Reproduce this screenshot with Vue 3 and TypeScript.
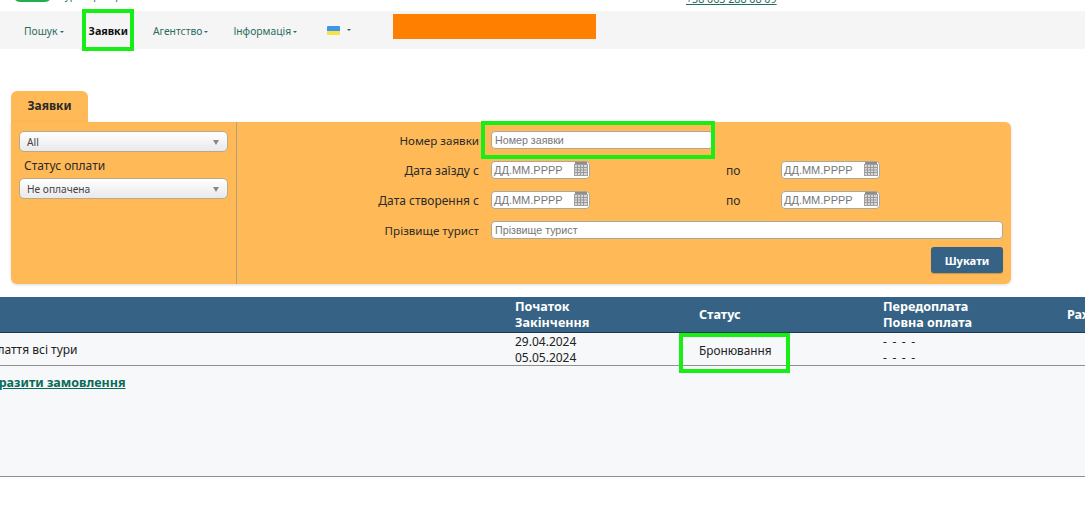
<script setup lang="ts">
const navItems = [
  { label: 'Пошук', caret: true },
  { label: 'Заявки', active: true },
  { label: 'Агентство', caret: true },
  { label: 'Інформація', caret: true }
]
const dateRows = ['Дата заїзду с', 'Дата створення с']
</script>

<template>
  <div class="page">
    <div class="topstrip">
      <div class="logo"></div>
      <div class="slogan">туроператор</div>
      <a class="phone">+38 063 288 08 09</a>
    </div>

    <nav class="nav">
      <div
        v-for="item in navItems"
        :key="item.label"
        class="nav-item"
        :class="{ active: item.active }"
      >
        {{ item.label }}<i v-if="item.caret" class="caret"></i>
        <span v-if="item.active" class="hl hl-nav"></span>
      </div>
      <div class="nav-flag">
        <svg width="13" height="9" viewBox="0 0 13 9">
          <rect width="13" height="9" rx="1" fill="#3f97e6" />
          <rect y="5" width="13" height="4" fill="#f6e345" />
        </svg>
        <i class="caret flag-caret"></i>
      </div>
      <div class="orange"></div>
    </nav>

    <div class="tab">Заявки</div>
    <section class="panel">
      <div class="side">
        <div class="select">All<i class="sel-arrow"></i></div>
        <div class="side-label">Статус оплати</div>
        <div class="select">Не оплачена<i class="sel-arrow"></i></div>
      </div>
      <div class="form">
        <div class="row">
          <label class="tight">Номер заявки</label>
          <div class="input num">
            Номер заявки
            <span class="hl hl-input"></span>
          </div>
        </div>
        <div v-for="r in dateRows" :key="r" class="row">
          <label>{{ r }}</label>
          <div class="input date">
            ДД.ММ.РРРР
            <svg class="cal" width="14" height="17" viewBox="0 0 14 17">
              <rect x="1" y="2" width="12" height="3" fill="#8d8d8d" />
              <rect x="0.5" y="4.5" width="13" height="11" fill="#d8d8d8" stroke="#a0a0a0" />
              <path d="M3.5 5v10M6.5 5v10M9.5 5v10M1 7.5h12M1 10h12M1 12.5h12" stroke="#999" stroke-width="1" fill="none" />
            </svg>
          </div>
          <span class="po">по</span>
          <div class="input date">
            ДД.ММ.РРРР
            <svg class="cal" width="14" height="17" viewBox="0 0 14 17">
              <rect x="1" y="2" width="12" height="3" fill="#8d8d8d" />
              <rect x="0.5" y="4.5" width="13" height="11" fill="#d8d8d8" stroke="#a0a0a0" />
              <path d="M3.5 5v10M6.5 5v10M9.5 5v10M1 7.5h12M1 10h12M1 12.5h12" stroke="#999" stroke-width="1" fill="none" />
            </svg>
          </div>
        </div>
        <div class="row">
          <label class="tight">Прізвище турист</label>
          <div class="input wide">Прізвище турист</div>
        </div>
        <div class="actions"><button class="btn">Шукати</button></div>
      </div>
    </section>

    <section class="table">
      <div class="thead">
        <div></div>
        <div>Початок<br />Закінчення</div>
        <div>Статус</div>
        <div>Передоплата<br />Повна оплата</div>
        <div>Рахунок</div>
      </div>
      <div class="trow">
        <div class="tour"><span>Оплаття всі тури</span></div>
        <div class="dates">29.04.2024<br />05.05.2024</div>
        <div class="status">
          Бронювання
          <span class="hl hl-status"></span>
        </div>
        <div class="dashes">- - - -<br />- - - -</div>
        <div></div>
      </div>
      <div class="detail">
        <a class="show">Відобразити замовлення</a>
      </div>
    </section>
  </div>
</template>

<style>
html, body { margin: 0; background: #fff; overflow: hidden; }
</style>

<style scoped>
.page {
  width: 1085px;
  height: 508px;
  overflow: hidden;
  font-family: "Noto Sans", "DejaVu Sans", sans-serif;
  font-size: 12px;
  color: #222;
}
.topstrip {
  height: 11px;
  display: flex;
  align-items: flex-end;
  overflow: hidden;
  position: relative;
}
.logo {
  width: 39px;
  height: 20px;
  margin: 0 0 9px 13px;
  background: #21b04b;
  border-radius: 0 0 7px 7px;
  flex: none;
}
.slogan {
  margin: 0 0 10px 8px;
  width: 60px;
  line-height: 12px;
  font-size: 10px;
  color: #1f6e5e;
  flex: none;
}
.phone {
  margin: 0 0 5px 566px;
  font-size: 10.7px;
  line-height: 14px;
  color: #1f6e5e;
  text-decoration: underline;
  white-space: nowrap;
  flex: none;
}
.nav {
  height: 38px;
  background: #f5f5f5;
  display: flex;
  align-items: center;
  padding-left: 24px;
  font-size: 10.3px;
  color: #2b6b60;
}
.nav-item {
  position: relative;
  margin-right: 25px;
  white-space: nowrap;
  margin-top: 1px;
}
.nav-item.active {
  font-size: 10.7px;
  font-weight: 700;
  color: #111;
}
.caret {
  display: inline-block;
  width: 0;
  height: 0;
  margin-left: 2px;
  vertical-align: middle;
  border-left: 2px solid transparent;
  border-right: 2px solid transparent;
  border-top: 2px solid #2b6b60;
}
.nav-flag {
  display: flex;
  align-items: center;
  margin-left: 5px;
}
.flag-caret { margin-left: 7px; }
.orange {
  width: 203px;
  height: 25px;
  margin: -7px 0 0 42px;
  background: #ff7f00;
}
.hl {
  position: absolute;
  border: 4px solid #16ee16;
  pointer-events: none;
  box-sizing: border-box;
}
.hl-nav { left: -7px; top: -15px; width: 52px; height: 42px; }
.hl-input { left: -11px; top: -11px; width: 234px; height: 38px; }
.hl-status { left: -20px; top: -9px; width: 111px; height: 40px; }

.tab {
  width: 77px;
  height: 31px;
  margin: 42px 0 0 11px;
  background: #ffba57;
  border-radius: 6px 6px 0 0;
  font-weight: 700;
  font-size: 12px;
  line-height: 30px;
  text-align: center;
  color: #2a2a2a;
}
.panel {
  width: 1000px;
  height: 162px;
  margin-left: 11px;
  background: #ffba57;
  border-radius: 0 6px 6px 6px;
  box-shadow: 0 1px 3px rgba(0, 0, 0, 0.15);
  display: flex;
}
.side {
  box-sizing: border-box;
  border-right: 1px solid #b5a07d;
  padding: 9px 8px 0 8px;
  flex: none;
  width: 226px;
}
.select {
  position: relative;
  height: 21px;
  line-height: 20px;
  width: 209px;
  box-sizing: border-box;
  padding-left: 7px;
  font-size: 10.2px;
  color: #444;
  background: linear-gradient(#fff, #e9e9ec);
  border: 1px solid #b9a98c;
  border-radius: 5px;
}
.sel-arrow {
  position: absolute;
  right: 8px;
  top: 8px;
  border-left: 3px solid transparent;
  border-right: 3px solid transparent;
  border-top: 5px solid #888;
}
.side-label {
  margin: 5px 0 4px 5px;
  line-height: 17px;
  color: #2a2a2a;
}
.form {
  flex: 1;
  padding-top: 9px;
  padding-right: 8px;
}
.row {
  display: flex;
  align-items: center;
  height: 18px;
  margin-bottom: 12px;
}
.row label {
  width: 242px;
  margin-right: 12px;
  text-align: right;
  flex: none;
  color: #2a2a2a;
}
.row label.tight { font-size: 11.6px; }
.input {
  position: relative;
  box-sizing: border-box;
  height: 18px;
  line-height: 16px;
  padding-left: 3px;
  font-family: "Liberation Sans", Arial, sans-serif;
  font-size: 10.7px;
  color: #777;
  background: #fff;
  border: 1px solid #a8a8a0;
  border-radius: 4px;
  white-space: nowrap;
}
.num { width: 222px; }
.date { width: 99px; padding-left: 2px; font-size: 11px; }
.wide { flex: 1; }
.cal {
  position: absolute;
  right: 1px;
  top: -2px;
}
.po {
  width: 55px;
  margin-left: 136px;
  flex: none;
  color: #2a2a2a;
}
.actions {
  display: flex;
  justify-content: flex-end;
  margin-top: -4px;
}
.btn {
  width: 72px;
  height: 26px;
  padding: 0;
  border: 0;
  border-radius: 3px;
  background: #366385;
  color: #fff;
  font: 700 11.2px "Noto Sans", "DejaVu Sans", sans-serif;
  box-shadow: 0 1px 1px rgba(0, 0, 0, 0.2);
}
.table { margin-top: 13px; }
.thead, .trow {
  display: grid;
  grid-template-columns: 515px 184px 184px 184px 184px;
}
.thead {
  height: 36px;
  box-sizing: border-box;
  background: #366385;
  border-bottom: 1px solid #1f3a50;
  color: #fff;
  font-weight: 700;
  font-size: 12.6px;
  line-height: 16px;
  align-items: center;
  white-space: nowrap;
}
.trow {
  height: 33px;
  box-sizing: border-box;
  padding-top: 1px;
  background: #f6f8fa;
  border-bottom: 1px solid #8f8f8f;
  align-items: center;
  line-height: 16px;
}
.tour span {
  margin-left: -19px;
  white-space: nowrap;
}
.status { position: relative; font-size: 11.8px; }
.dashes { letter-spacing: 1.2px; }
.detail {
  height: 111px;
  box-sizing: border-box;
  background: #f6f8fa;
  border-bottom: 1px solid #8f8f8f;
  padding-top: 8px;
  overflow: hidden;
}
.show {
  display: block;
  margin-left: -37px;
  font-weight: 700;
  font-size: 12.5px;
  line-height: 18px;
  color: #0b6a58;
  text-decoration: underline;
  white-space: nowrap;
}
</style>
